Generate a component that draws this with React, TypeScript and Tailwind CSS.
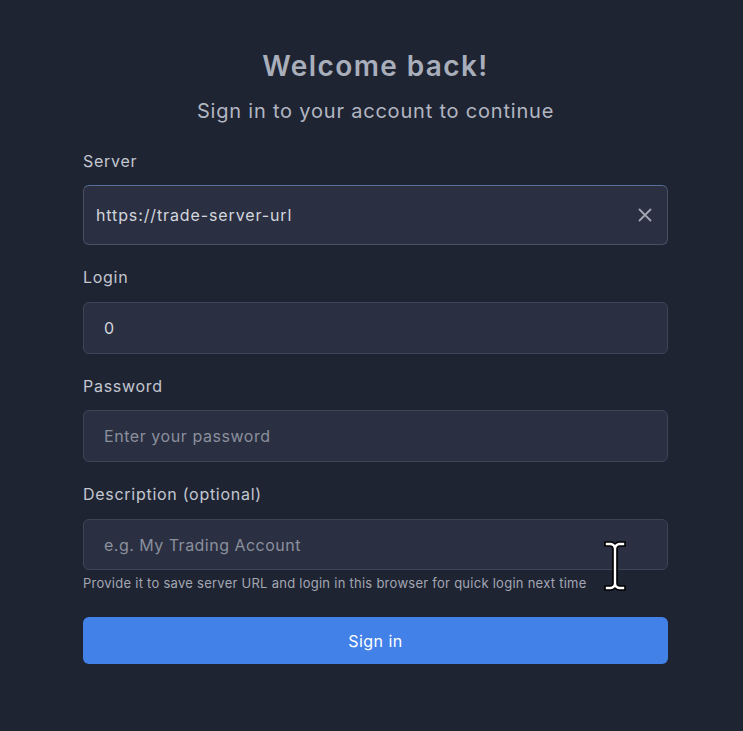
import React from 'react';

function ClearIcon() {
    return (
        <svg width="16" height="16" viewBox="0 0 16 16" fill="none" stroke="#a3a7b3" strokeWidth="1.8" strokeLinecap="round">
            <path d="M2.5 2.5L13.5 13.5M13.5 2.5L2.5 13.5" />
        </svg>
    );
}

function TextCursor() {
    return (
        <svg width="24" height="52" viewBox="0 0 24 52" className="absolute left-[603px] top-[540px] pointer-events-none">
            <path
                d="M2 2h6c2 0 3 1 4 2c1-1 2-2 4-2h6v4h-5c-2 0-3 1-3 3v34c0 2 1 3 3 3h5v4h-6c-2 0-3-1-4-2c-1 1-2 2-4 2H2v-4h5c2 0 3-1 3-3V9c0-2-1-3-3-3H2z"
                fill="#fff"
                stroke="#000"
                strokeWidth="1.6"
                strokeLinejoin="round"
            />
        </svg>
    );
}

export default function App() {
    const font = { fontFamily: 'Inter, "Noto Sans", sans-serif' };

    return (
        <div className="relative min-h-[731px] w-full bg-[#1f2433]" style={font}>
            <div className="ml-[83px] w-[585px] pt-12">
                <h1 className="text-center text-[28px] leading-9 font-semibold tracking-[0.05em] text-[#a9aebb]">Welcome back!</h1>
                <p className="mt-[13px] text-center text-[20px] leading-7 tracking-[0.04em] text-[#b2b6c1]">Sign in to your account to continue</p>

                <div className="mt-6 flex flex-col gap-5 tracking-[0.045em]">
                    <div>
                        <label className="mb-3 block text-[16px] leading-6 text-[#c3c7d0]">Server</label>
                        <div className="flex h-[60px] items-center rounded-md border border-[#4a5063] border-t-[#55709a] bg-[#2a2f42] pl-[12px] pr-[14px]">
                            <span className="flex-1 text-[16px] tracking-[0.055em] text-[#d3d6dd]">https://trade-server-url</span>
                            <ClearIcon />
                        </div>
                    </div>

                    <div>
                        <label className="mb-[13px] block text-[16px] leading-6 text-[#c3c7d0]">Login</label>
                        <div className="flex h-[52px] items-center rounded-md border border-[#3e4456] bg-[#2a2f42] px-5">
                            <span className="text-[16px] text-[#d3d6dd]">0</span>
                        </div>
                    </div>

                    <div>
                        <label className="mb-3 block text-[16px] leading-6 text-[#c3c7d0]">Password</label>
                        <div className="flex h-[52px] items-center rounded-md border border-[#3e4456] bg-[#2a2f42] px-5">
                            <span className="text-[16px] tracking-[0.035em] text-[#8b909d]">Enter your password</span>
                        </div>
                    </div>

                    <div>
                        <label className="mb-[13px] block text-[16px] leading-6 text-[#c3c7d0]">Description (optional)</label>
                        <div className="flex h-[51px] items-center rounded-md border border-[#3e4456] bg-[#2a2f42] px-5">
                            <span className="text-[16px] tracking-[0.03em] text-[#8b909d]">e.g. My Trading Account</span>
                        </div>
                        <p className="mt-1 text-[13px] leading-[18px] tracking-[0.02em] text-[#a3a7b2]">Provide it to save server URL and login in this browser for quick login next time</p>
                    </div>
                </div>

                <button className="mt-[25px] flex h-[47px] w-full items-center justify-center rounded-md bg-[#4281e8] text-[16px] tracking-[0.03em] text-white">
                    Sign in
                </button>
            </div>
            <TextCursor />
        </div>
    );
}
